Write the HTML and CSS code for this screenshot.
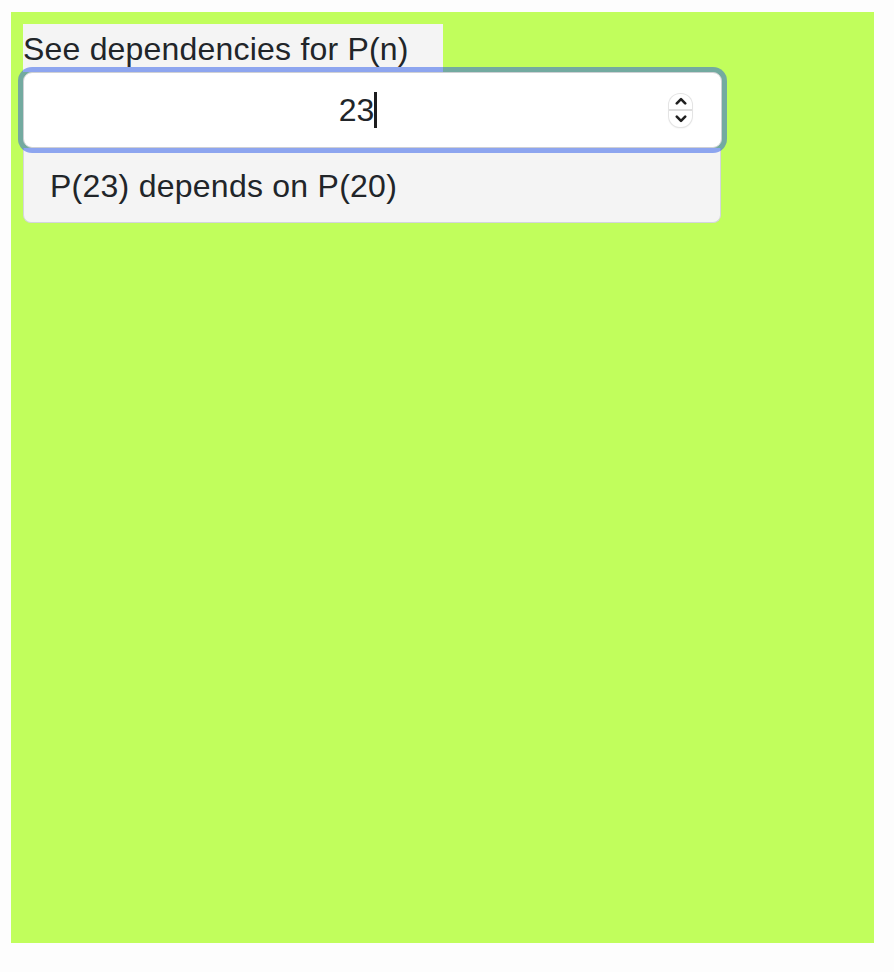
FILE: index.html
```html
<!DOCTYPE html>
<html lang="en">
<head>
<meta charset="utf-8">
<title>Dependencies</title>
<link rel="stylesheet" href="styles.css">
</head>
<body>
<main class="app">
  <label class="field-label" for="n-input">See dependencies for P(n)</label>
  <div class="number-input" id="n-input" role="spinbutton" aria-valuenow="23">
    <div class="value-area"><span class="value">23</span><span class="caret"></span></div>
    <div class="spinner">
      <span class="spin-btn">
        <svg width="12" height="8" viewBox="0 0 12 8"><path d="M1.8 6.4 L6 2.2 L10.2 6.4" fill="none" stroke="#1f1f1f" stroke-width="2.6" stroke-linecap="round" stroke-linejoin="round"/></svg>
      </span>
      <span class="spin-divider"></span>
      <span class="spin-btn">
        <svg width="12" height="8" viewBox="0 0 12 8"><path d="M1.8 1.6 L6 5.8 L10.2 1.6" fill="none" stroke="#1f1f1f" stroke-width="2.6" stroke-linecap="round" stroke-linejoin="round"/></svg>
      </span>
    </div>
  </div>
  <div class="result">P(23) depends on P(20)</div>
</main>
</body>
</html>
```

FILE: styles.css
```css
html, body {
  margin: 0;
  padding: 0;
  background: #fdfdfd;
}

body {
  font-family: "Liberation Sans", Arial, sans-serif;
  color: #212529;
}

.app {
  margin: 12px 0 0 11px;
  width: 863px;
  height: 931px;
  box-sizing: border-box;
  padding: 12px 12px;
  background: #c1fe5c;
}

.field-label {
  display: block;
  width: 420px;
  height: 48px;
  line-height: 50px;
  font-size: 32px;
  letter-spacing: 0.2px;
  background: #f4f4f4;
  white-space: nowrap;
}

.number-input {
  position: relative;
  z-index: 1;
  display: flex;
  align-items: center;
  width: 699px;
  height: 76px;
  box-sizing: border-box;
  padding: 0 29px 0 20px;
  background: #ffffff;
  border: 1px solid #cfd0d4;
  border-radius: 9px;
  box-shadow: 0 0 0 5px rgba(30, 80, 235, 0.48);
}

.value-area {
  flex: 1;
  display: flex;
  justify-content: center;
  align-items: center;
  font-size: 32px;
  line-height: 48px;
}

.value {
  display: inline-block;
}

.caret {
  display: inline-block;
  width: 3px;
  height: 36px;
  margin-right: -3px;
  background: #1d1d1f;
}

.spinner {
  display: flex;
  flex-direction: column;
  width: 23px;
  height: 33px;
  box-sizing: border-box;
  background: #ffffff;
  border-radius: 11px;
  box-shadow: 0 0 0 1px #e4e4e4, 0 1px 2px rgba(0, 0, 0, 0.12);
  overflow: hidden;
}

.spin-btn {
  flex: 1;
  display: flex;
  align-items: center;
  justify-content: center;
}

.spin-divider {
  height: 2px;
  background: #dedede;
}

.result {
  width: 698px;
  height: 75px;
  box-sizing: border-box;
  padding: 14px 26px 0;
  font-size: 32px;
  line-height: 48px;
  letter-spacing: 0.25px;
  background: #f4f4f4;
  border: 1px solid #d3d5dc;
  border-top: none;
  border-radius: 0 0 8px 8px;
  white-space: nowrap;
}
```
